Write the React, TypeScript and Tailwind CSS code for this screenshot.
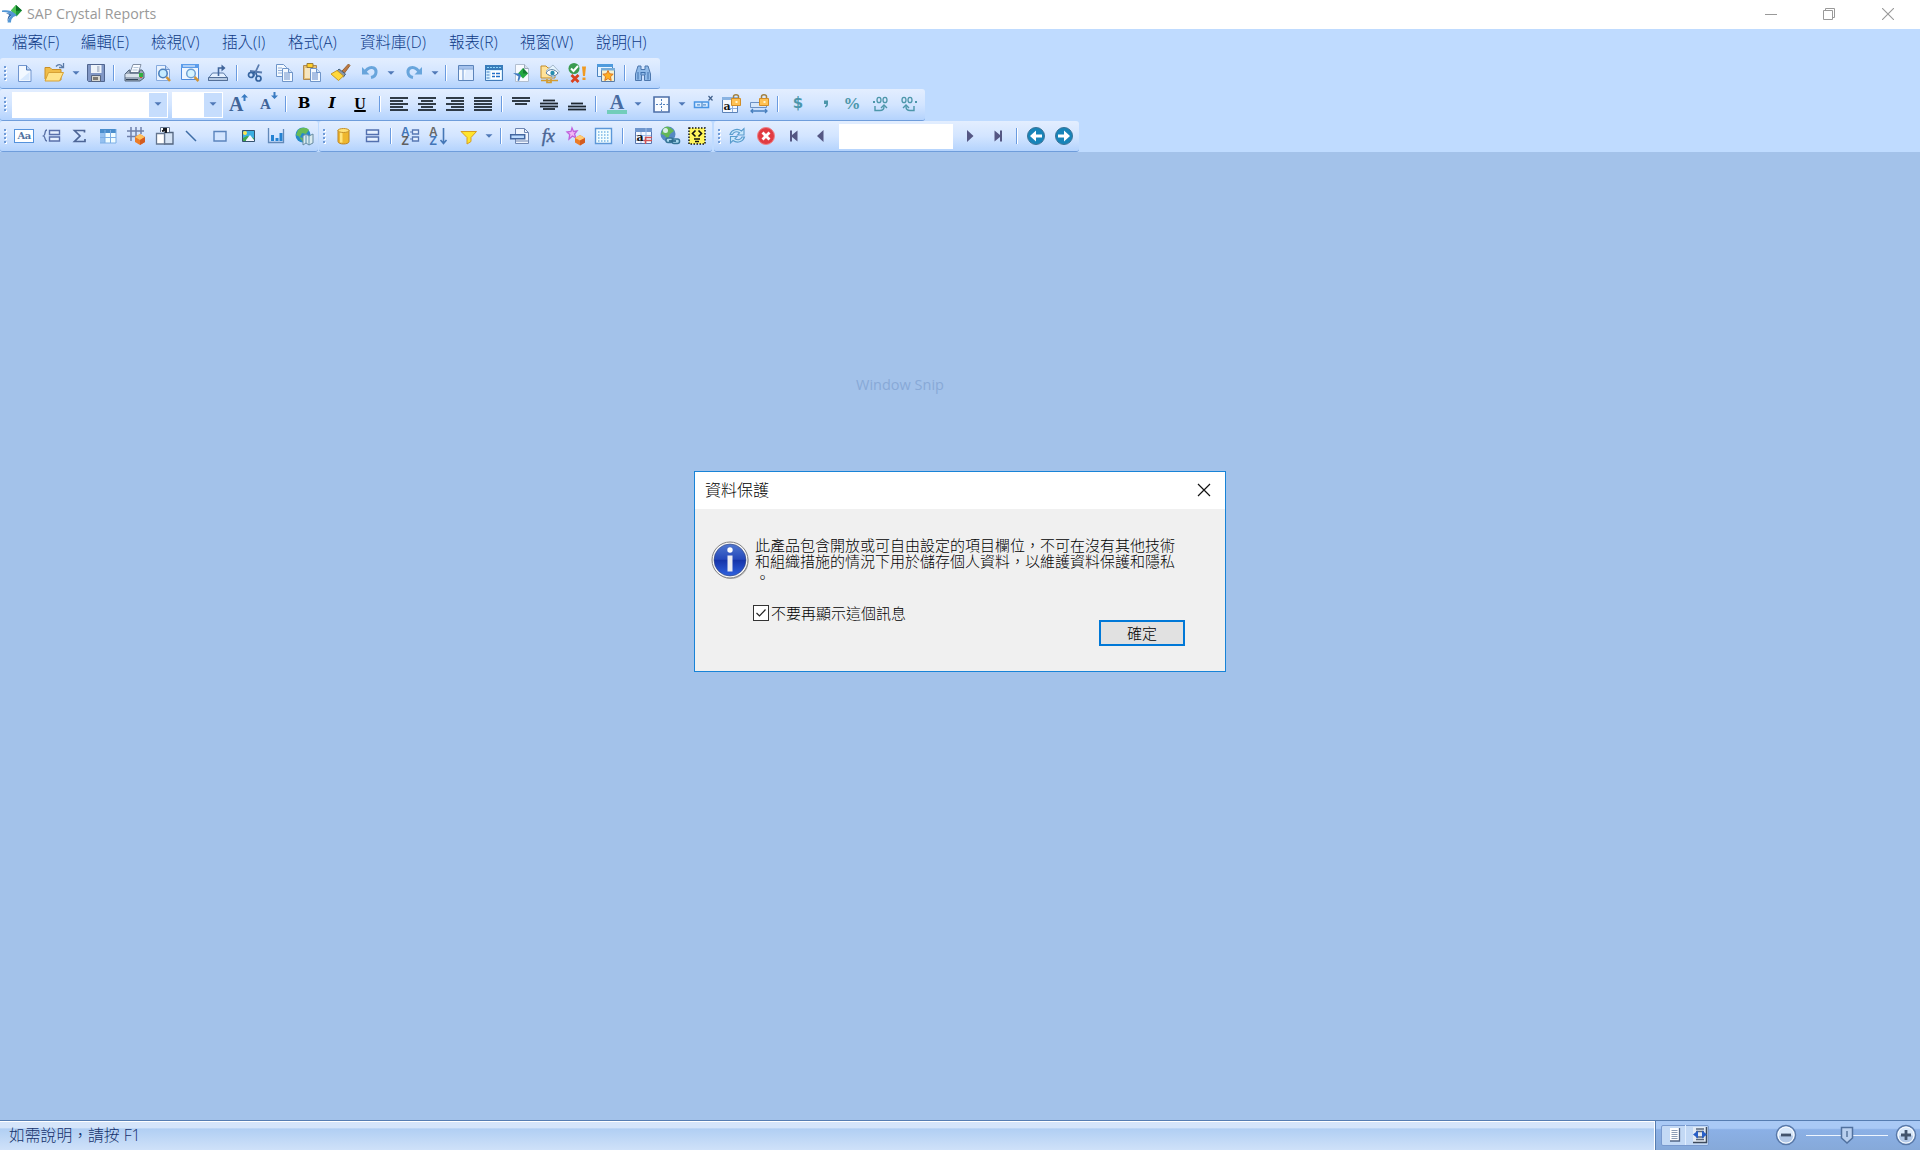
import type { ReactNode } from "react";

const latinCjk = "font-['Open_Sans','Noto_Sans_CJK_TC',sans-serif]";

function I({ g, children }: { g: string; children: ReactNode }) {
  return (
    <svg className={`${g} h-5 w-5 shrink-0 overflow-visible`} viewBox="0 0 20 20" fill="none">
      {children}
    </svg>
  );
}

function Grip({ g }: { g: string }) {
  return (
    <div className={`${g} flex w-[3px] shrink-0 flex-col gap-[2px]`}>
      {[0, 1, 2, 3].map((n) => (
        <div key={n} className="h-[2px] w-[2px] bg-[#6f9bd8] shadow-[1px_1px_0_#fff]" />
      ))}
    </div>
  );
}

function Sep({ g }: { g: string }) {
  return <div className={`${g} h-4 w-[2px] shrink-0 border-r border-l border-r-white border-l-[#6a9be0]`} />;
}

function Arr({ g }: { g: string }) {
  return (
    <svg className={`${g} h-2 w-2 shrink-0`} viewBox="0 0 8 8">
      <path d="M.5 2.2h7L4 5.8z" fill="#5079b8" />
    </svg>
  );
}

function Bar({ w, children }: { w: string; children: ReactNode }) {
  return (
    <div
      className={`${w} flex shrink-0 items-center rounded-r-[3px] rounded-l-[3px] border-b border-[#6f9ddb] bg-linear-to-b from-[#e3eeff] via-[#d3e5ff] to-[#b4d3fd]`}
    >
      {children}
    </div>
  );
}

function Combo({ w }: { w: string }) {
  return (
    <div className={`${w} mt-[3px] flex h-[26px] shrink-0 justify-end bg-white p-px`}>
      <div className="flex w-[18px] items-center justify-center bg-[#c6ddfd] pb-[3px]">
        <Arr g="ml-0" />
      </div>
    </div>
  );
}

function Page({ x = 0, y = 0 }: { x?: number; y?: number }) {
  return (
    <g transform={`translate(${x} ${y})`}>
      <path d="M.5.5h6l4 4v9H.5z" fill="#f3f9ff" stroke="#6f95c9" />
      <path d="M6.5.5v4h4" fill="#cfe2f8" stroke="#6f95c9" />
    </g>
  );
}

function Lines({ ys }: { ys: [number, number, number][] }) {
  return (
    <>
      {ys.map(([y, a, b]) => (
        <path key={y} d={`M${a} ${y}H${b}`} stroke="#1d2731" strokeWidth="1.8" />
      ))}
    </>
  );
}

function FileBar() {
  return (
    <Bar w="h-[31px] w-[660px]">
      <Grip g="ml-1" />
      <I g="ml-[7px]">
        <path d="M4.500 2.500h8l4.500 4.500V18.500H4.500z" fill="#f2f8ff" stroke="#7095cf" />
        <path d="M12.500 2.500v4.500H17" fill="#bdd4f2" stroke="#527cba" />
        <path d="M6 17h9.500V9z" fill="#d7e8fd" />
      </I>
      <I g="ml-[10px]">
        <path d="M1 16V4.500h5l2 2h9V17H2z" fill="#f0bd48" stroke="#c98f27" />
        <path d="M4.500 9.500h15L15.500 18H1z" fill="#ffe48a" stroke="#d7a135" />
        <path d="M12 3.500c2-2.500 5-2.500 6.500.5m-3.500.5h4.500V0" stroke="#5b7ba8" strokeWidth="1.300" />
      </I>
      <Arr g="ml-2" />
      <I g="ml-[6px]">
        <path d="M1.500 1.500h17v17h-16l-1-1z" fill="#8197c5" stroke="#50658f" />
        <path d="M5 2h10.500v8H5z" fill="#edf3fa" />
        <path d="M11 3h2.500v6H11z" fill="#b9c3d3" />
        <path d="M5.500 12.500h9v6h-9z" fill="#d8d7d0" stroke="#55647f" />
        <path d="M7 14h5v3H7z" fill="#7c7a74" />
      </I>
      <Sep g="ml-[7px]" />
      <I g="ml-[9px]">
        <path d="M6 9.500 9 1.500h8l-2.500 8z" fill="#f8fbff" stroke="#8290a5" />
        <path d="M9.500 4.500h5m-6 2.500h5" stroke="#b4c5d9" />
        <path d="m1 11 4-4h1v3h9l1-3h2l2 3v5l-4 3H1z" fill="#9ca9ba" stroke="#52657b" />
        <path d="M1.500 11h14v3h-14z" fill="#dae3ec" />
        <path d="M2 16.500h12" stroke="#34465b" />
        <path d="M15 10h4v4h-4z" fill="#35ae41" />
        <path d="M16 14h2v1h-2z" fill="#db4c32" />
      </I>
      <I g="ml-[9px]">
        <path d="M3.500 2.500h9l4 4v11h-13z" fill="#e8f2ff" stroke="#86aade" />
        <path d="M12.500 2.500v4h4" fill="#bdd4f2" stroke="#7095cf" />
        <circle cx="10" cy="10.500" r="4.200" fill="#c5ebff" stroke="#4c81bd" strokeWidth="1.600" />
        <path d="m13.500 14 3.500 4" stroke="#cf9438" strokeWidth="2.500" />
      </I>
      <I g="ml-[7px]">
        <path d="M1.500 1.500h17v15h-17z" fill="#eff6ff" stroke="#4e8bdd" />
        <path d="M1 1h18v4H1z" fill="#5c9deb" />
        <path d="M3 3h12" stroke="#fff" />
        <circle cx="11" cy="10.500" r="4.300" fill="#d5f4ff" stroke="#6fa0d3" strokeWidth="1.500" />
        <path d="m14.500 14 4 4" stroke="#cf9438" strokeWidth="2.500" />
      </I>
      <I g="ml-2">
        <path d="m.5 15 4-5h11l4 5v2.500H.5z" fill="#e2efff" stroke="#5b7ba8" />
        <path d="M.5 14.500h19v3H.5z" fill="#b5c9e2" stroke="#536f98" />
        <path d="M10.500 13V5h4" stroke="#40659b" strokeWidth="1.600" />
        <path d="m13.500 1.500 4 3.500-4 3.500z" fill="#40659b" />
      </I>
      <Sep g="ml-2" />
      <I g="ml-2">
        <path d="m13 1.500-5.500 12M4 8l12 1.500" stroke="#5a7caf" strokeWidth="1.800" />
        <circle cx="5" cy="12" r="2.500" stroke="#34639f" strokeWidth="1.700" />
        <circle cx="12.500" cy="15.500" r="2.500" stroke="#34639f" strokeWidth="1.700" />
        <path d="m7 10 2-1m2 4-1-3" stroke="#34639f" strokeWidth="1.500" />
      </I>
      <I g="ml-2">
        <path d="M2.500 1.500h7l3 3v9h-10z" fill="#f3f9ff" stroke="#6f95c9" />
        <path d="M4 5h4M4 7.500h4M4 10h4" stroke="#92afd8" />
        <Page x={8} y={5} />
        <path d="M10 10h6m-6 2h6m-6 2h6m-6 2h6" stroke="#6d91cb" />
      </I>
      <I g="ml-2">
        <path d="M1.500 2.500h13v14h-13z" fill="#e5c078" stroke="#ad8a56" />
        <path d="M3 5h9v10H3z" fill="#f5e5c0" />
        <path d="M5 .5h6v4H5z" fill="#ffcf29" stroke="#9b7d39" />
        <Page x={8} y={5} />
        <path d="M10 10h6m-6 2h6m-6 2h6m-6 2h6" stroke="#6188c9" />
      </I>
      <I g="ml-2">
        <path d="m12 8 6.500-7L20 2.500 14.500 10z" fill="#bd7843" stroke="#966637" />
        <path d="m9 6 6.500 5-2 3L6 9z" fill="#8a96a5" stroke="#46617b" />
        <path d="m7 7.500 6.500 5.500-5 4.500L1 11z" fill="#ffd83c" stroke="#c69826" />
      </I>
      <I g="ml-[10px]">
        <path d="M9.500 11.500H2V4z" fill="#68a5dc" />
        <path d="m4.500 9 3-3c4.500-3.500 9-.5 8.500 3.500-.3 2.500-2 4.500-5 5" stroke="#68a5dc" strokeWidth="3" />
      </I>
      <Arr g="ml-[7px]" />
      <I g="ml-[9px]">
        <path d="M10.500 11.500H18V4z" fill="#68a5dc" />
        <path d="m15.500 9-3-3C8 2.500 3.500 5.500 4 9.500c.3 2.500 2 4.500 5 5" stroke="#68a5dc" strokeWidth="3" />
      </I>
      <Arr g="ml-[7px]" />
      <Sep g="ml-[6px]" />
      <I g="ml-[9px]">
        <path d="M2.500 2.500h15v15h-15z" fill="#f5faff" stroke="#5c84ba" />
        <path d="M3 3h14v2.500H3z" fill="#a5c2ec" />
        <path d="M3 6h14M7 6v11" stroke="#6a95d2" />
        <path d="M10 7h7v10H8z" fill="#e0edff" />
      </I>
      <I g="ml-2">
        <path d="M1.500 2.500h17v15h-17z" fill="#d8f0ff" stroke="#427ab8" />
        <path d="M1 2h18v5H1z" fill="#397cba" />
        <path d="M3 4.500h14" stroke="#8cd5f8" strokeDasharray="2 1" />
        <path d="M2.500 9h3m-3 3h3m-3 3h3" stroke="#4a84c6" />
        <path d="M7 8h10v8H7z" fill="#fff" />
        <path d="M8 10.500h3m1 0h4m-8 3h3m1 0h4" stroke="#2472c8" strokeWidth="1.700" />
      </I>
      <I g="ml-[7px]">
        <path d="M4.500 1.500h9l4 4v13h-13z" fill="#f7faff" stroke="#b2bfd0" />
        <path d="M13.500 1.500v4h4" fill="#d7e0eb" stroke="#9baabd" />
        <path d="m12 5 5 5.500-5 5-5-5z" fill="#24a840" />
        <path d="m12 5 5 5.500h-5z" fill="#127b30" />
        <path d="m2 10 6 .5 2 2-2 5.500-1.500-.5 1-4z" fill="#417cc1" />
      </I>
      <I g="ml-[9px]">
        <path d="M1 15V3h5l2 2h7v10z" fill="#ffe39a" stroke="#c38b26" />
        <path d="m6 8 7-6 6.500 7L13 15z" fill="#e4f4ff" stroke="#a5b9cc" />
        <path d="M6 10c3-5 9-4 12 0-3 4-8 4-12 0z" fill="#fff" stroke="#597b9c" />
        <circle cx="12.500" cy="10" r="2.200" fill="#268cae" />
        <path d="M1 17.500h17M7 16v3.500h4V16" stroke="#d39b2f" strokeWidth="1.700" />
      </I>
      <I g="ml-[7px]">
        <circle cx="7" cy="5.500" r="5.500" fill="#3b9b50" />
        <path d="m4 5.500 2.500 2.500L11 3" stroke="#fff" strokeWidth="2" />
        <path d="m4.500 12 7 7m0-7-7 7" stroke="#d94220" strokeWidth="2.800" />
        <path d="M15 3.500h4L18 13h-2zM15.500 14.500h3V17h-3z" fill="#f09a22" />
      </I>
      <I g="ml-[9px]">
        <path d="M1.500 1.500h15v12h-15z" fill="#e7f4ff" stroke="#4b83bf" />
        <path d="M1 1h16v3H1z" fill="#4f9bdd" />
        <path d="M5.500 5.500h13v13h-13z" fill="#f6f1cf" stroke="#597ca8" />
        <path d="M5 5h14v2.500H5z" fill="#77acd8" />
        <path d="m12 7.500 1.500 3.200 3.700.5-2.700 2.500.7 3.800-3.200-1.900-3.200 1.900.7-3.800-2.700-2.500 3.700-.5z" fill="#ffae20" stroke="#d76e18" strokeWidth=".9" />
      </I>
      <Sep g="ml-2" />
      <I g="ml-[7px]">
        <path d="M5 3h3v3.500h4V3h3l2.500 8v6.500h-6V12h-3v5.500h-6V11z" fill="#8fbae9" stroke="#4d77ad" />
        <path d="M5 9v7.500M8 9v3m4-3v3m3-3v7.500M8 9.500h4" stroke="#3f71ae" />
      </I>
    </Bar>
  );
}

function FormatBar() {
  return (
    <Bar w="h-8 w-[925px] pb-[2px]">
      <Grip g="ml-1" />
      <Combo w="ml-[5px] w-[156px]" />
      <Combo w="ml-1 w-[51px]" />
      <div className="ml-[5px] flex w-5 shrink-0 font-['Liberation_Serif',serif] text-[20px] leading-5 font-bold text-[#3f6498]">
        <span className="pl-px">A</span>
        <svg className="-ml-[2px] h-[7px] w-[7px] shrink-0" viewBox="0 0 7 7">
          <path d="M0 3.500 3.500 0 7 3.500H4.500V7h-2V3.500z" fill="#397bc2" />
        </svg>
      </div>
      <div className="ml-[10px] flex w-5 shrink-0 font-['Liberation_Serif',serif] text-[15px] leading-[24px] font-bold text-[#3f6498]">
        <span className="pl-[2px]">A</span>
        <svg className="h-[7px] w-[7px] shrink-0" viewBox="0 0 7 7">
          <path d="M0 3.500 3.500 7 7 3.500H4.500V0h-2v3.500z" fill="#397bc2" />
        </svg>
      </div>
      <Sep g="ml-[7px]" />
      <span className="ml-[7px] w-5 shrink-0 text-center font-['DejaVu_Serif',serif] text-[15px] font-bold">B</span>
      <span className="ml-2 w-5 shrink-0 text-center font-['DejaVu_Serif',serif] text-[15px] font-bold italic">I</span>
      <span className="ml-2 w-5 shrink-0 text-center font-['Liberation_Serif',serif] text-[16px] font-bold underline decoration-2 underline-offset-1">
        U
      </span>
      <Sep g="ml-[9px]" />
      <I g="ml-2">
        <Lines ys={[[4, 1, 19], [7, 1, 14], [10, 1, 19], [13, 1, 14], [16, 1, 19]]} />
      </I>
      <I g="ml-2">
        <Lines ys={[[4, 1, 19], [7, 4, 16], [10, 1, 19], [13, 4, 16], [16, 1, 19]]} />
      </I>
      <I g="ml-2">
        <Lines ys={[[4, 1, 19], [7, 6, 19], [10, 1, 19], [13, 6, 19], [16, 1, 19]]} />
      </I>
      <I g="ml-2">
        <Lines ys={[[4, 1, 19], [7, 1, 19], [10, 1, 19], [13, 1, 19], [16, 1, 19]]} />
      </I>
      <Sep g="ml-2" />
      <I g="ml-2">
        <Lines ys={[[4, 1, 19], [7, 1, 19], [10, 4, 16]]} />
      </I>
      <I g="ml-2">
        <Lines ys={[[6.500, 4, 16], [9.500, 1, 19], [12.500, 1, 19], [15, 4, 16]]} />
      </I>
      <I g="ml-2">
        <Lines ys={[[9.500, 4, 16], [12.500, 1, 19], [15.500, 1, 19]]} />
      </I>
      <Sep g="ml-2" />
      <span className="ml-[10px] h-5 w-5 shrink-0 border-b-4 border-[#72cdbb] text-center font-['Liberation_Serif',serif] text-[20px] leading-4 font-bold text-[#486ba0]">
        A
      </span>
      <Arr g="ml-[7px]" />
      <I g="ml-[9px]">
        <path d="M3 3h15v15H3z" fill="#f8fbff" stroke="#4c6fa8" strokeWidth="1.600" />
        <path d="M10.500 5v12M5 10.500h12" stroke="#4d7ebd" strokeDasharray="2 1.500" />
      </I>
      <Arr g="ml-[7px]" />
      <I g="ml-[7px]">
        <path d="M1.500 8h14v5.500h-14z" fill="#d7eaff" stroke="#4995e4" strokeWidth="1.500" />
        <path d="M4 10.800h3m2-2.800v5m1-2.200h3" stroke="#5a91cd" strokeWidth="1.300" />
        <path d="m15.500 2 4 4.500m0-4.500-4 4.500" stroke="#42618c" strokeWidth="1.200" />
      </I>
      <I g="ml-2">
        <path d="M1.500 3.500h15v15h-15z" fill="#f4f8ff" stroke="#5b82b8" />
        <path d="M1 3h16v3H1z" fill="#89b3e2" />
        <path d="M9 14.500h7M11.500 7v11" stroke="#8faedb" />
        <text x="2.500" y="16" fontSize="11" fontFamily="DejaVu Serif" fontWeight="bold" fill="#111">a</text>
        <path d="M12.500 5V2.500c0-2.500 5-2.500 5 0V5" stroke="#a18142" strokeWidth="1.500" />
        <path d="M10.500 4.500h9v7h-9z" fill="#ffc152" stroke="#d18d28" />
        <path d="M14.500 7h2v2h-2z" fill="#fff2cc" />
      </I>
      <I g="ml-2">
        <path d="M1.500 8.500h16v5h-16z" fill="#d3e5fb" stroke="#6b90c3" />
        <path d="M2 17h16M4 15l-2 2 2 2m12-4 2 2-2 2" stroke="#477fbe" strokeWidth="1.300" />
        <path d="M12.500 4V2.500c0-2.500 5-2.500 5 0V4" stroke="#a18142" strokeWidth="1.500" />
        <path d="M10.500 4.500h9v7h-9z" fill="#ffc152" stroke="#d18d28" />
        <path d="M14.500 7h2v2h-2z" fill="#fff2cc" />
      </I>
      <Sep g="ml-2" />
      <span className="ml-[9px] w-5 shrink-0 text-center font-['DejaVu_Sans',sans-serif] text-[15px] font-bold text-[#4c96aa]">$</span>
      <I g="ml-2">
        <path d="M8 6.500h4V10c0 2-1 3-3 3.500V12c1-.3 1.300-1 1.200-2H8z" fill="#4c96aa" />
      </I>
      <span className="ml-[6px] flex w-5 shrink-0 justify-center font-['Liberation_Serif',serif] text-[17px] font-bold text-[#4c96aa]">%</span>
      <I g="ml-[9px]">
        <path d="M2 7h2v2H2z" fill="#4c96aa" />
        <ellipse cx="8" cy="6" rx="2" ry="2.700" stroke="#4c96aa" strokeWidth="1.300" />
        <ellipse cx="14" cy="6" rx="2" ry="2.700" stroke="#4c96aa" strokeWidth="1.300" />
        <path d="M4 12v4.500h5c3 0 4-1 4-4m-3 1.500 3-3 3 3" stroke="#4c96aa" strokeWidth="1.400" />
      </I>
      <I g="ml-2">
        <path d="M16 7h2v2h-2z" fill="#4c96aa" />
        <ellipse cx="5" cy="6" rx="2" ry="2.700" stroke="#4c96aa" strokeWidth="1.300" />
        <ellipse cx="11" cy="6" rx="2" ry="2.700" stroke="#4c96aa" strokeWidth="1.300" />
        <path d="M15 12v4.500h-4c-3 0-4-1-4-4m3 1.500-3-3-3 3" stroke="#4c96aa" strokeWidth="1.400" />
      </I>
    </Bar>
  );
}

function InsertBar() {
  return (
    <Bar w="w-[318px]">
      <Grip g="ml-1" />
      <div className="ml-[7px] flex h-[14px] w-5 shrink-0 items-center justify-center border border-[#5592dc] bg-white font-['DejaVu_Serif',serif] text-[10px] leading-3 font-bold tracking-[-0.5px] text-[#50719f]">
        Aa
      </div>
      <I g="ml-2">
        <path d="M5 4C2 4 4 9 1.500 10 4 11 2 15 5 15" stroke="#5870a5" strokeWidth="1.300" />
        <path d="M7.500 4.500h10v4h-10zm0 6.500h10v4h-10z" fill="#e7f1ff" stroke="#5a70aa" strokeWidth="1.400" />
      </I>
      <I g="ml-2">
        <path d="M14.500 6.500v-2h-10L10 10l-5.500 5.500h10.500V13" stroke="#4d6596" strokeWidth="1.700" />
      </I>
      <I g="ml-2">
        <path d="M2 3h16v4H2z" fill="#498dcc" />
        <path d="M2 7h5v10H2z" fill="#93c0f0" />
        <path d="M7 7h11v10H7z" fill="#effcff" />
        <path d="M2 11.500h16M2 17h16M7 4v13m5.500-13v13m5.500-14v14" stroke="#7baee5" />
      </I>
      <I g="ml-2">
        <path d="M1 5h17M1 10.500h11M5 1v14m5-14v10m5-10v7" stroke="#6f80ab" strokeWidth="1.500" />
        <path d="m9 11 5-3 5 3v5l-5 3-5-3z" fill="#eb7c28" />
        <path d="m9 11 5-3 5 3-5 3z" fill="#ffc15e" />
        <path d="m14 14 5-3v5l-5 3z" fill="#d35c20" />
      </I>
      <I g="ml-[9px]">
        <path d="M9.500 6.500h8.500v11.500H9.500z" fill="#d5e3f4" stroke="#52647e" strokeWidth="1.300" />
        <path d="M1.500 7.500h8V18h-8z" fill="#fff" stroke="#63758f" strokeWidth="1.300" />
        <path d="M5.500 6V1.500h9V6" fill="#fff" stroke="#63758f" />
        <path d="M8 3h4M11 2v5M7 5l4-1" stroke="#151a21" strokeWidth="2" />
      </I>
      <I g="ml-[6px]">
        <path d="m5 5 10 10" stroke="#3e6da6" strokeWidth="1.500" />
      </I>
      <I g="ml-[9px]">
        <path d="M4 5.500h12V15H4z" fill="#d3e5ff" stroke="#5b84bd" strokeWidth="1.400" />
      </I>
      <I g="ml-2">
        <path d="M4.500 4.500h12v11h-12z" fill="#3bafe2" stroke="#35526f" />
        <circle cx="7" cy="7" r="2" fill="#ffe450" />
        <path d="m5 12 4-2 7 2v3H5z" fill="#42a74f" />
        <path d="m8 14 4-5 4 5v1H8z" fill="#f5f7ff" />
      </I>
      <I g="ml-2">
        <path d="M2.500 2v14.500H17.500V3" stroke="#6289b9" strokeWidth="1.300" />
        <path d="M5 9h3v6H5zm4.500 3h3v3h-3zm4-5h3v8h-3z" fill="#2482d2" />
      </I>
      <I g="ml-2">
        <circle cx="9" cy="9" r="7.500" fill="#258aca" />
        <path d="M4 4c3-3 9-3 11 0l-3 4-4-1-2 4-4-2zm1 7 4 1v4z" fill="#67bb57" />
        <path d="m9 10 3-2 3 2 4-2v9l-4 2-3-2-3 2z" fill="#d9ebef" stroke="#678aa0" />
        <path d="M12 8v9m3-7v9" stroke="#5a91b0" />
      </I>
    </Bar>
  );
}

function ExpertBar() {
  return (
    <Bar w="ml-px w-[393px]">
      <Grip g="ml-1" />
      <I g="ml-[7px]">
        <path d="M5 4v11.500c0 3.300 11 3.300 11 0V4z" fill="#eeb72f" stroke="#bd8423" />
        <path d="M7 6v10.500h2.500V6z" fill="#ffe47c" />
        <ellipse cx="10.500" cy="4.500" rx="5.500" ry="2" fill="#ffe278" stroke="#c69129" />
      </I>
      <I g="ml-[9px]">
        <path d="M4.500 4h12v4.500h-12zm0 7h12v4.500h-12z" fill="#e6f1ff" stroke="#5370af" strokeWidth="1.400" />
      </I>
      <Sep g="ml-2" />
      <I g="ml-2">
        <text x="1" y="9.500" fontSize="12" fontFamily="Liberation Sans" fontWeight="bold" fill="#4275b8">A</text>
        <text x="1.500" y="19" fontSize="12" fontFamily="Liberation Sans" fontWeight="bold" fill="#606060">Z</text>
        <path d="M12.500 4h6v4h-6zm0 7h6v4h-6z" fill="#e4efff" stroke="#5778b4" strokeWidth="1.300" />
        <path d="M10 6h2m-2 7h2" stroke="#5778b4" />
      </I>
      <I g="ml-2">
        <text x="1" y="9.500" fontSize="12" fontFamily="Liberation Sans" fontWeight="bold" fill="#686868">A</text>
        <text x="1.500" y="19" fontSize="12" fontFamily="Liberation Sans" fontWeight="bold" fill="#4275b8">Z</text>
        <path d="M15.500 2v15m-3-3 3 3.500 3-3.500" stroke="#4577b6" strokeWidth="1.600" />
      </I>
      <I g="ml-[11px]">
        <path d="M2 5.500h15.500L12 11.500v4l-4 2.500v-6.500z" fill="#ffe52d" stroke="#d79e22" />
      </I>
      <Arr g="ml-[6px]" />
      <Sep g="ml-[7px]" />
      <I g="ml-2">
        <path d="M5.500 2.500h9l4 4v11h-13z" fill="#eef4fe" stroke="#6e86b2" />
        <path d="M14.500 2.500v4h4M6 15h12" stroke="#6e86b2" />
        <path d="M.7 8.700h14v4H.7z" fill="#bcdbff" stroke="#4367a0" strokeWidth="1.500" />
      </I>
      <span className="ml-2 w-5 shrink-0 text-center font-['Liberation_Serif',serif] text-[19px] leading-5 tracking-[-0.5px] text-[#4a6595] italic [-webkit-text-stroke:0.4px_#4a6595]">
        fx
      </span>
      <I g="ml-2">
        <path d="m6 2 1.500 3.500L11 5 8.500 8l1.500 4-3.500-2L3 13l.7-4.500L1 6l4-.5z" fill="#f0b8f6" stroke="#c060dc" strokeWidth="1.300" />
        <path d="m9 12 5-3 5 3v4.500l-5 3-5-3z" fill="#eb7c28" />
        <path d="m9 12 5-3 5 3-5 2.500z" fill="#ffcb74" />
        <path d="m14 14.500 5-2.500v4.500l-5 3z" fill="#d35c20" />
      </I>
      <I g="ml-[7px]">
        <path d="M2.500 2.500h16v15h-16z" fill="#f2fdff" stroke="#5c97d8" strokeWidth="1.400" />
        <path d="M5 6h12M5 9h12M5 12h12M5 15h12" stroke="#79b5e5" strokeWidth="1.500" strokeDasharray="1.500 1.500" />
      </I>
      <Sep g="ml-[9px]" />
      <I g="ml-[9px]">
        <path d="M2.500 2.500h16v15h-16z" fill="#f4f8ff" stroke="#5876af" />
        <path d="M2 2h17v4H2z" fill="#6f96cd" />
        <path d="M3 9.500h15M3 14.500h15M8 6v11m5-15v15" stroke="#a0bee6" />
        <text x="3.500" y="15" fontSize="11" fontFamily="DejaVu Serif" fontWeight="bold" fill="#111">a</text>
        <path d="M19 11.500h-6.500V18M10.500 14.500H19" stroke="#d25354" strokeWidth="1.500" />
      </I>
      <I g="ml-[7px]">
        <circle cx="8" cy="8" r="7.500" fill="#5589c2" />
        <path d="M3 3c4-5 9 0 11 2l-4 3-2 5-4-4-3-1z" fill="#63b755" />
        <circle cx="5.500" cy="4.500" r="2.500" fill="#d9efe8" />
        <rect x="6" y="12" width="7" height="4.500" rx="2" fill="#a7d8ed" stroke="#367597" strokeWidth="1.500" />
        <rect x="12" y="13" width="7.500" height="4.500" rx="2" fill="#a7d8ed" stroke="#367597" strokeWidth="1.500" />
        <path d="M9 15h7" stroke="#286788" strokeWidth="1.700" />
      </I>
      <I g="ml-[7px]">
        <path d="M2 2h16v16H2z" fill="#fff55c" stroke="#111" strokeWidth="1.500" strokeDasharray="1.500 1.500" />
        <path d="M8.500 4.500 5.500 7.500l3 3M11.500 4.500l3 3-3 3M7 13h6m-5 2.500h4" stroke="#111" strokeWidth="1.600" />
      </I>
    </Bar>
  );
}

function NavigationBar() {
  return (
    <Bar w="ml-[2px] w-[365px]">
      <Grip g="ml-1" />
      <I g="ml-[6px]">
        <path d="M3 8.500c1.500-5 7.500-6.500 11.500-3.500L17 2.500V9h-6.500l2-2.200c-3-2-6-.8-7 1.700z" fill="#c9e7fb" stroke="#599ccd" strokeWidth="1.100" />
        <path d="M17.500 11c-1.500 5-7.500 6.500-11.500 3.500L3.500 17v-6.500H10l-2 2.200c3 2 6 .8 7-1.700z" fill="#c9e7fb" stroke="#599ccd" strokeWidth="1.100" />
      </I>
      <I g="ml-[9px]">
        <circle cx="10" cy="10" r="8.500" fill="#e13b42" stroke="#ee8287" />
        <path d="m6.500 6.500 7 7m0-7-7 7" stroke="#fff" strokeWidth="2.800" />
      </I>
      <I g="ml-2">
        <path d="M6 4.500h2V9l5.500-4.500v11L8 11v4.500H6z" fill="#555783" />
      </I>
      <I g="ml-[6px]">
        <path d="M13.500 4v12L7 10z" fill="#555783" />
      </I>
      <div className="ml-[9px] h-[25px] w-[114px] shrink-0 bg-white" />
      <I g="ml-[7px]">
        <path d="M7 4v12l6.500-6z" fill="#555783" />
      </I>
      <I g="ml-2">
        <path d="M14 4.500h-2V9L6.500 4.500v11L12 11v4.500h2z" fill="#555783" />
      </I>
      <Sep g="ml-2" />
      <I g="ml-2">
        <circle cx="10" cy="10" r="8.500" fill="#1784b9" stroke="#3b7397" />
        <path d="M4 10 10 4.500v4h6v3h-6v4z" fill="#fff" />
      </I>
      <I g="ml-2">
        <circle cx="10" cy="10" r="8.500" fill="#1784b9" stroke="#3b7397" />
        <path d="m16 10-6-5.500v4H4v3h6v4z" fill="#fff" />
      </I>
    </Bar>
  );
}

function WarningDialog() {
  return (
    <div className="absolute top-[471px] left-[694px] flex h-[201px] w-[532px] flex-col border border-[#1883d7] bg-[#f0f0f0] text-black">
      <div className="flex h-[37px] shrink-0 items-center justify-between bg-white pr-[14px] pb-px pl-[10px]">
        <span className="-mt-[3px] font-['Noto_Sans_CJK_TC',sans-serif] text-[16px] leading-5 font-light">資料保護</span>
        <svg className="h-[14px] w-[14px]" viewBox="0 0 14 14">
          <path d="m1 1 12 12M13 1 1 13" stroke="#111" strokeWidth="1.200" />
        </svg>
      </div>
      <div className="flex pt-[29px] pl-4">
        <svg className="mt-[2px] h-[40px] w-[38px] shrink-0" viewBox="0 0 38 40">
          <defs>
            <linearGradient id="info" x2="0" y2="1">
              <stop stopColor="#5078d0" />
              <stop offset=".48" stopColor="#2448ba" />
              <stop offset=".5" stopColor="#1533a8" />
              <stop offset="1" stopColor="#2f62df" />
            </linearGradient>
          </defs>
          <ellipse cx="20" cy="21.500" rx="17.500" ry="17.500" fill="#b3b3b3" />
          <circle cx="19" cy="20" r="18" fill="#fafafa" stroke="#7e7e80" />
          <circle cx="19" cy="20" r="16" fill="url(#info)" stroke="#37477b" strokeWidth=".6" />
          <circle cx="19" cy="10" r="2.700" fill="#fff" />
          <path d="M16.500 15.500h5v16h-5z" fill="#ececf1" />
        </svg>
        <p className="-mt-px ml-[6px] h-[49px] font-['Noto_Sans_CJK_TC',sans-serif] text-[15px] leading-4 font-light whitespace-nowrap">
          此產品包含開放或可自由設定的項目欄位，不可在沒有其他技術
          <br />
          和組織措施的情況下用於儲存個人資料，以維護資料保護和隱私
          <br />。
        </p>
      </div>
      <div className="flex pl-[58px]">
        <div className="mt-[17px] flex h-5 items-center">
          <div className="h-4 w-4 border border-[#333] bg-white">
            <svg className="h-[14px] w-[14px]" viewBox="0 0 14 14" fill="none">
              <path d="m2.500 7 3 3 6-6.500" stroke="#222" strokeWidth="1.200" />
            </svg>
          </div>
          <span className="ml-[2px] font-['Noto_Sans_CJK_TC',sans-serif] text-[15px] leading-5 font-light whitespace-nowrap">不要再顯示這個訊息</span>
        </div>
        <button className="mt-[34px] ml-[193px] h-[26px] w-[86px] border-2 border-[#0078d7] bg-[#e1e1e1] font-['Noto_Sans_CJK_TC',sans-serif] text-[15px] leading-5 font-light">
          確定
        </button>
      </div>
    </div>
  );
}

function ZoomButton({ g, plus }: { g: string; plus: boolean }) {
  return (
    <svg className={`${g} h-[22px] w-[22px] shrink-0`} viewBox="0 0 22 22">
      <circle cx="11" cy="11" r="9.500" fill="#d9e8fa" stroke="#5878a8" strokeWidth="1.500" />
      <path d="M4 12c5-3 9-3 14 0a7 7 0 0 1-14 0" fill="#b3c9e8" />
      <circle cx="11" cy="11" r="8" fill="none" stroke="#fff" opacity=".8" />
      <path d={plus ? "M6 11h10M11 6v10" : "M6 11h10"} stroke="#43546d" strokeWidth="2.800" />
    </svg>
  );
}

const menus: [string, string][] = [
  ["檔案(F)", "w-[69px]"],
  ["編輯(E)", "w-[70px]"],
  ["檢視(V)", "w-[71px]"],
  ["插入(I)", "w-[66px]"],
  ["格式(A)", "w-[72px]"],
  ["資料庫(D)", "w-[89px]"],
  ["報表(R)", "w-[71px]"],
  ["視窗(W)", "w-[76px]"],
  ["說明(H)", "w-[60px]"],
];

export default function App() {
  return (
    <div className={`relative flex h-[1150px] w-[1920px] flex-col overflow-hidden bg-[#a3c2ea] ${latinCjk}`}>
      <header className="flex h-[29px] shrink-0 items-center bg-white pb-px pl-[2px]">
        <svg className="h-5 w-5" viewBox="0 0 20 20">
          <path d="m14 1 6 5.500-5.500 6L9 6.500z" fill="#1d9a3a" />
          <path d="M14 1v11L9 6.500z" fill="#4cc455" />
          <path d="m14 1 6 5.500-6 .500z" fill="#0c6d25" />
          <path d="M0 6.500c5-1 10 0 13 3l2 2c-4 1-6 3-6 7H5.500c1-4 2-5 4-7C7 8.500 4 7.500 0 8z" fill="#5397d5" />
          <path d="M4 9c3 0 5 1 5.500 2.500-2 1-3 3-4 6 0-4 1-6 2-6.500z" fill="#2b64a7" />
        </svg>
        <span className="ml-[5px] w-[140px] text-[14.200px] leading-5 whitespace-nowrap text-[#999]">SAP Crystal Reports</span>
        <div className="ml-auto flex items-center pr-[26px]">
          <div className="h-px w-3 bg-[#999]" />
          <svg className="ml-[46px] h-3 w-3" viewBox="0 0 12 12" fill="none" stroke="#999">
            <path d="M.5 2.500h9v9h-9zM2.500 2V.5h9v9H10" />
          </svg>
          <svg className="ml-[47px] h-3 w-3" viewBox="0 0 12 12" fill="none" stroke="#999" strokeWidth="1.100">
            <path d="m0 0 12 12M12 0 0 12" />
          </svg>
        </div>
      </header>
      <nav className="flex h-[29px] shrink-0 items-center bg-[#bfdbff] pb-[3px] pl-3 text-[15.500px] leading-5 font-light text-[#0d3985]">
        {menus.map(([label, w]) => (
          <span key={label} className={`${w} shrink-0 whitespace-nowrap`}>
            {label}
          </span>
        ))}
      </nav>
      <section className="flex h-[94px] shrink-0 flex-col bg-[#bfdbff]">
        <FileBar />
        <FormatBar />
        <div className="flex h-[31px]">
          <InsertBar />
          <ExpertBar />
          <NavigationBar />
        </div>
      </section>
      <main className="flex-1">
        <p className="mt-[223px] ml-[856px] text-[14.500px] leading-5 text-[#88a9d7]">Window Snip</p>
      </main>
      <footer className="flex h-[30px] shrink-0 border-t border-[#567db1] text-[#15316b]">
        <div className="flex w-[1655px] items-center border-t border-r border-white bg-linear-to-b from-[#d5e5fa] from-20% via-[#b1cff3] via-25% to-[#cfe1f9] pb-[2px] pl-[9px] text-[15.800px] leading-5 font-light">
          如需說明，請按 F1
        </div>
        <div className="flex flex-1 items-center border-l border-[#567db1] bg-linear-to-b from-[#a9c9f5] from-25% via-[#8bb0e6] via-30% to-[#86a9d9] pb-px">
          <div className="ml-[5px] flex h-[21px] w-12 items-center rounded-[2px] border border-[#7899ce] bg-[#c3d9f5]">
            <svg className="h-5 w-[46px]" viewBox="0 0 46 20" fill="none">
              <path d="M8 3h9v13H8z" fill="#fff" />
              <path d="M8 16h9.500V3" stroke="#536788" strokeWidth="1.300" />
              <path d="M9.500 5.500h6m-6 2h6m-6 2h6m-6 2h6m-6 2h6" stroke="#8d9db5" />
              <path d="M23.500 0v20" stroke="#e1eeff" />
              <path d="M31 2h13v15H31z" fill="#e3ebf5" />
              <path d="M44.500 2v15.500H31" stroke="#3d4a5c" strokeWidth="1.500" />
              <path d="M34 4h8M34 6.500h8M34 12h8M34 14.500h8" stroke="#5b687b" strokeWidth="1.300" />
              <path d="m31 9.500 5-4v8zm14 0-5-4v8z" fill="#285fc8" />
            </svg>
          </div>
          <ZoomButton g="ml-[66px]" plus={false} />
          <svg className="ml-[8px] h-[22px] w-[84px] shrink-0" viewBox="0 0 84 22">
            <path d="M1 11.500h82" stroke="#eef5ff" />
            <path d="M36.500 3.500h11v10.500l-5.500 5-5.500-5z" fill="#bad0ef" stroke="#51719f" strokeWidth="1.500" />
            <path d="M42 7v6" stroke="#58779f" strokeWidth="1.500" />
          </svg>
          <ZoomButton g="ml-[6px]" plus />
        </div>
      </footer>
      <WarningDialog />
    </div>
  );
}
